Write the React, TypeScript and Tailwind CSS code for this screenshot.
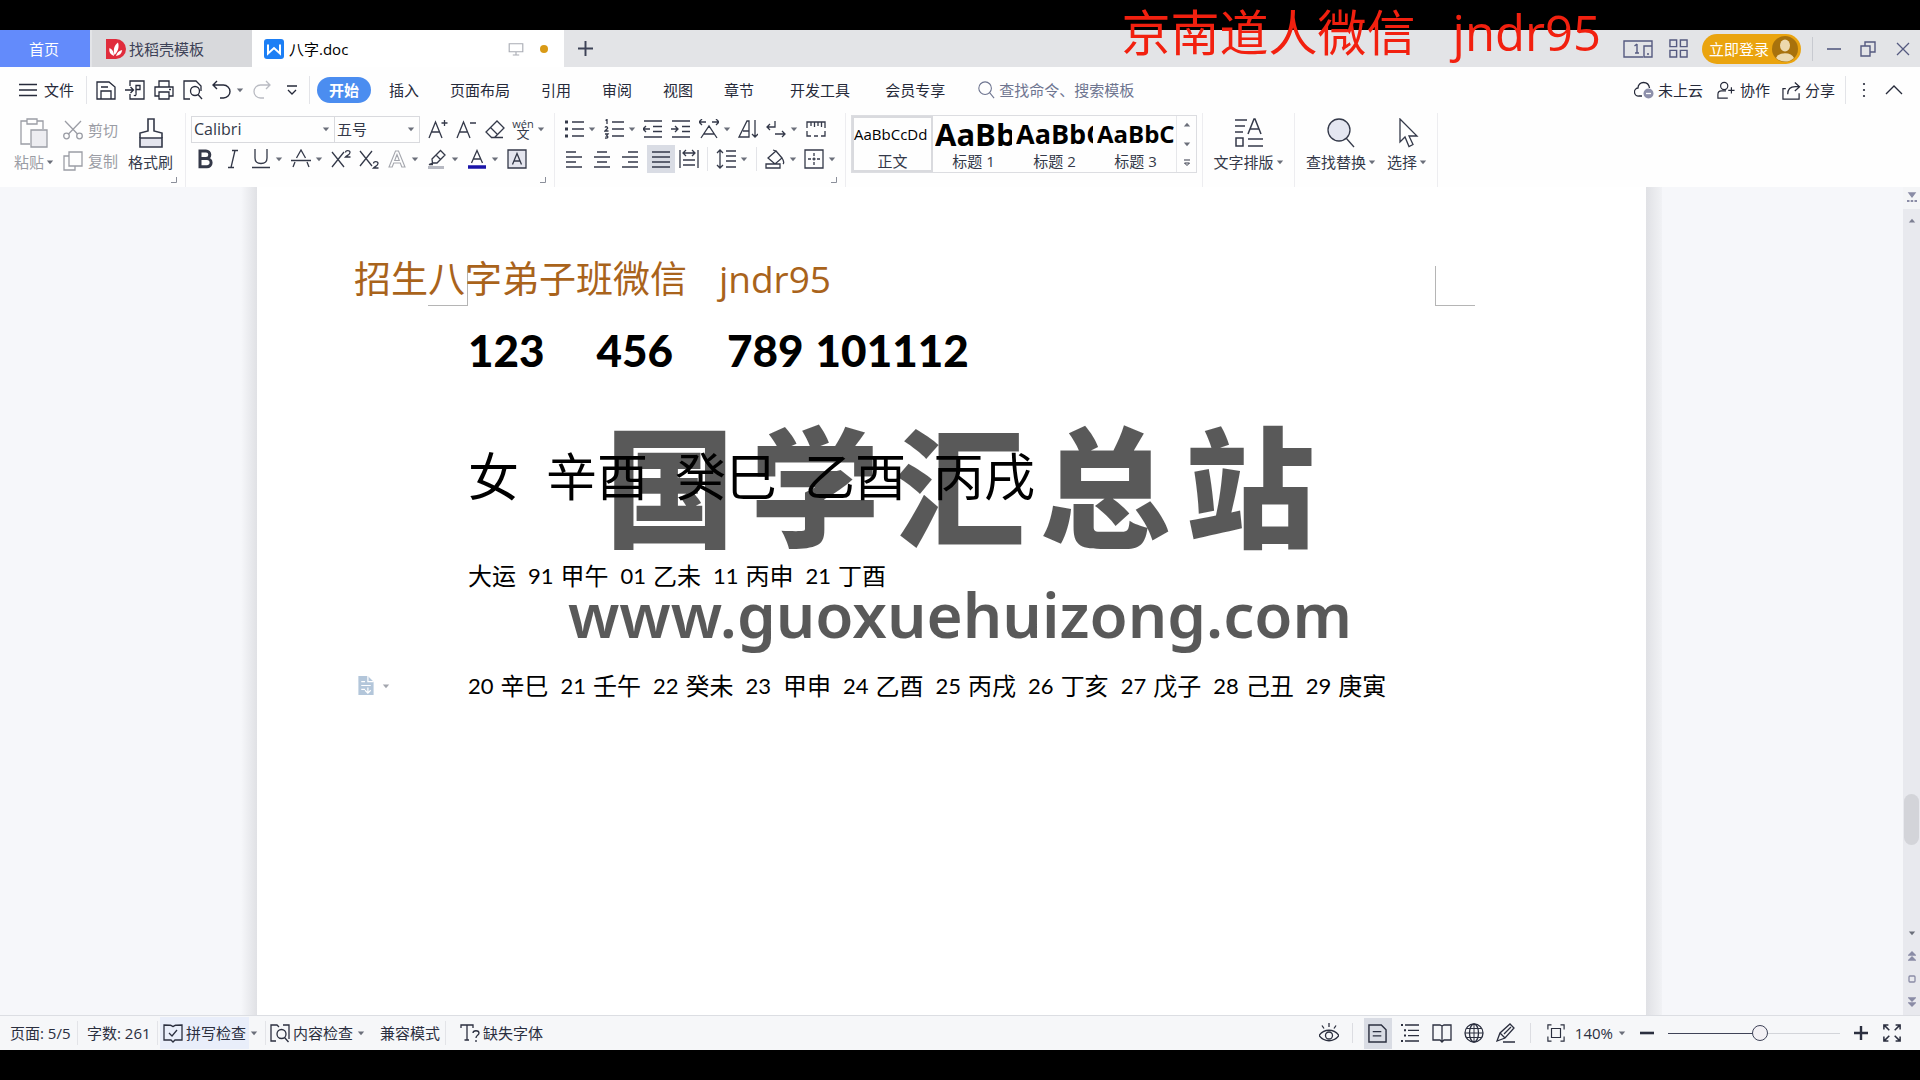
import type { ReactNode } from "react";

type IconProps = { children: ReactNode; className?: string; box?: string; sw?: number };

function Icon({ children, className = "size-5", box = "0 0 20 20", sw = 1.3 }: IconProps) {
  return (
    <svg viewBox={box} className={`shrink-0 ${className}`} fill="none" stroke="currentColor" strokeWidth={sw} aria-hidden="true">
      {children}
    </svg>
  );
}

function Caret({ className = "text-[#6b6f7a]" }: { className?: string }) {
  return (
    <svg viewBox="0 0 8 8" className={`size-2 shrink-0 ${className}`} fill="currentColor" aria-hidden="true">
      <path d="M.8 2.500h6.400L4 6.200z" />
    </svg>
  );
}

function Tool({ label, children, caret = false, className = "" }: { label: string; children: ReactNode; caret?: boolean; className?: string }) {
  return (
    <button type="button" aria-label={label} className={`flex h-7 items-center gap-1 ${className}`}>
      {children}
      {caret && <Caret />}
    </button>
  );
}

function Divider({ className = "h-6 bg-[#e3e4e8]" }: { className?: string }) {
  return <div className={`w-px shrink-0 ${className}`} />;
}

function Corner() {
  return (
    <svg viewBox="0 0 6 6" className="absolute right-2 bottom-1 size-1.5" fill="none" stroke="#8b8f9a" aria-hidden="true">
      <path d="M5.500 0v5.500H0" />
    </svg>
  );
}

function TitleBar() {
  return (
    <header className="flex h-[37px] items-stretch bg-[#e3e4e7] text-[15px] leading-5 text-[#3d4257]">
      <button type="button" className="w-[90px] bg-[#638bfb] pr-0.5 text-white">首页</button>
      <button type="button" className="ml-0.5 flex w-40 items-center gap-[3px] bg-[#d8d9dc] pl-3.5">
        <svg viewBox="0 0 20 20" className="size-5" aria-hidden="true">
          <path d="M0 0h10a10 10 0 0 1 0 20H0z" fill="#e02c3c" />
          <path d="M8 17C4 15.500 2.800 12.500 3.500 9c3 1.500 4.500 4 4.500 8zM8.500 16C7 11 8 6.500 12 3.500c1.500 4.500 0 9-3.500 12.500zM10 17c.8-3.500 3-5.500 6.200-6-.3 3.500-2.700 5.500-6.200 6z" fill="#fff" />
        </svg>
        <span>找稻壳模板</span>
      </button>
      <div className="flex w-[312px] items-center bg-white pr-4 pl-3 text-black">
        <svg viewBox="0 0 20 20" className="size-5" aria-hidden="true">
          <rect width="20" height="20" rx="3" fill="#1d7ff5" />
          <path d="M4 5.500v9L10 9l6 5.500v-9" fill="none" stroke="#fff" strokeWidth="2" />
        </svg>
        <span className="ml-[5px]">八字.doc</span>
        <Icon className="ml-auto size-4 text-[#a9acb4]" sw={1.4}>
          <path d="M1.500 3.500h17v10h-17zM10 13.500v4M6 17.500h8" />
        </Icon>
        <span className="ml-4 size-2 rounded-full bg-[#d99a16]" />
      </div>
      <button type="button" aria-label="新建标签" className="flex w-[42px] items-center justify-center">
        <Icon className="size-[15px]" sw={2.6}><path d="M10 0v20M0 10h20" /></Icon>
      </button>
      <div className="ml-auto flex items-center pr-2.5 text-[#555a80]">
        <button type="button" aria-label="窗口布局">
          <Icon box="0 0 30 18" className="h-[18px] w-[30px]" sw={1.4}>
            <path d="M20 17H1V1h28v16M21 17V6h8v11zM14 4v9M11.500 6 14 4M12 13h4M24 14h2" />
          </Icon>
        </button>
        <button type="button" aria-label="应用" className="ml-4">
          <Icon className="size-[19px]" sw={1.5}>
            <path d="M1 1h7v7H1zM12 1h7v7h-7zM1 12h7v7H1zM12 12h7v7h-7z" />
          </Icon>
        </button>
        <button type="button" className="ml-3.5 flex h-[30px] w-[99px] items-center justify-between rounded-full bg-[#eaa40f] pr-[3px] pl-[7px] text-white">
          <span>立即登录</span>
          <svg viewBox="0 0 26 26" className="size-[26px]" aria-hidden="true">
            <circle cx="13" cy="13" r="13" fill="#a8720c" />
            <ellipse cx="13" cy="9.500" rx="5" ry="6" fill="#ecd9ad" />
            <path d="M4 22a9.500 7 0 0 1 18 0 13 13 0 0 1-18 0z" fill="#ecd9ad" />
          </svg>
        </button>
        <Divider className="ml-[11px] h-6 bg-[#c8cad0]" />
        <button type="button" aria-label="最小化" className="ml-3.5">
          <Icon box="0 0 14 14" className="size-3.5" sw={1.6}><path d="M0 7h14" /></Icon>
        </button>
        <button type="button" aria-label="还原" className="ml-[19px]">
          <Icon box="0 0 16 16" className="size-4" sw={1.4}><path d="M1 5h9v10H1zM5 5V1h10v10h-5" /></Icon>
        </button>
        <button type="button" aria-label="关闭" className="ml-5">
          <Icon box="0 0 14 14" className="size-3.5" sw={1.3}><path d="M1 1l12 12M13 1L1 13" /></Icon>
        </button>
      </div>
    </header>
  );
}

function MenuBar() {
  return (
    <nav className="flex h-[46px] items-center pr-[17px] pl-[19px] text-[15px] leading-5 text-[#262a3a]">
      <button type="button" className="flex items-center gap-[7px]">
        <Icon box="0 0 18 14" className="h-3.5 w-[18px]"><path d="M0 1.500h18M0 7h18M0 12.500h18" /></Icon>
        文件
      </button>
      <Divider className="mr-[9px] ml-3 h-7 bg-[#e3e4e8]" />
      <div className="flex items-center gap-[9px]">
        <Tool label="保存"><Icon><path d="M1 2h12l6 5v12H1zM5 19v-8h10v8M5 7h7" /></Icon></Tool>
        <Tool label="输出为PDF"><Icon><path d="M5 6V1h14v18H5v-5M0 10h8M5.500 7l3 3-3 3M11 13V5.500h4v4h-4M9 15c1 1.500 2.500.5 2-2" /></Icon></Tool>
        <Tool label="打印"><Icon><path d="M5 7V1h10v6M5 16H1V7h18v9h-4M5 12h10v7H5zM15 9.500h2" /></Icon></Tool>
        <Tool label="打印预览"><Icon><path d="M7 19H1V1h12l5 5v5" /><circle cx="12" cy="11" r="4.500" /><path d="m15 14.500 4 4.500" /></Icon></Tool>
        <Tool label="撤销" caret><Icon sw={1.4}><path d="M5 1 1 5l4 4M1 5h10.500a6.500 6.500 0 0 1 0 13H8" /></Icon></Tool>
        <Tool label="重做" className="-ml-px text-[#b9bbc2]"><Icon sw={1.3}><path d="m14 1 4 4-4 4M18 5H8.500a6.500 6.500 0 0 0 0 13H12" /></Icon></Tool>
        <Tool label="自定义快速访问" className="ml-1.5"><Icon box="0 0 10 12" className="h-3 w-2.5"><path d="M0 2h10M1 6l4 4 4-4" /></Icon></Tool>
      </div>
      <Divider className="ml-3 h-7 bg-[#e3e4e8]" />
      <button type="button" className="ml-[7px] h-[26px] w-[54px] rounded-full bg-[#4b8df0] font-bold text-white">开始</button>
      <div className="ml-[18px] flex gap-[31px]">
        <button type="button">插入</button>
        <button type="button">页面布局</button>
        <button type="button">引用</button>
        <button type="button">审阅</button>
        <button type="button">视图</button>
        <button type="button">章节</button>
      </div>
      <div className="ml-9 flex gap-[35px]">
        <button type="button">开发工具</button>
        <button type="button">会员专享</button>
      </div>
      <label className="ml-8 flex items-center gap-1 text-[#6e7590]">
        <Icon className="size-[18px]" sw={1.2}><circle cx="9" cy="8" r="7" /><path d="m14 13 5 6" /></Icon>
        <input type="text" aria-label="查找命令" placeholder="查找命令、搜索模板" className="w-40 bg-transparent outline-none placeholder:text-[#6e7590]" />
      </label>
      <div className="ml-auto flex items-center gap-3">
        <button type="button" className="flex items-center gap-1">
          <Icon><path d="M8 16H5a4 4 0 0 1-1-8C4 4.500 6.500 2.500 9.500 2.500S15 4.500 15.500 8" /><circle cx="14.500" cy="13.500" r="5" fill="#8d90ab" stroke="none" /><path d="M12 13.500h5" stroke="#fff" /></Icon>
          未上云
        </button>
        <button type="button" className="ml-0.5 flex items-center gap-[5px]">
          <Icon className="size-[18px]"><circle cx="8" cy="5.500" r="4" /><path d="M12 19H1v-4c0-2.500 1.500-4 4-4h5M16 7v7M12.500 10.500h7" /></Icon>
          协作
        </button>
        <button type="button" className="flex items-center gap-1">
          <Icon className="size-[19px]"><path d="M4 8H1v11h17v-6M6 14c0-5 3-8 8-8h4M13.500 1.500 18.500 6l-5 4.500" /></Icon>
          分享
        </button>
        <Divider className="-ml-0.5 h-7 bg-[#e3e4e8]" />
        <button type="button" aria-label="更多" className="ml-1">
          <svg viewBox="0 0 4 16" className="h-4 w-1" fill="currentColor" aria-hidden="true">
            <circle cx="2" cy="2" r="1.100" /><circle cx="2" cy="8" r="1.100" /><circle cx="2" cy="14" r="1.100" />
          </svg>
        </button>
        <button type="button" aria-label="收起功能区" className="ml-[7px]">
          <Icon box="0 0 18 10" className="h-2.5 w-[18px]"><path d="m1 9 8-8 8 8" /></Icon>
        </button>
      </div>
    </nav>
  );
}

function StyleCell({ sample, name, look, active = false }: { sample: string; name: string; look: string; active?: boolean }) {
  return (
    <button type="button" className={`flex h-[56px] w-[81px] flex-col items-center overflow-hidden px-0.5 ${active ? "outline-2 -outline-offset-2 outline-[#d9dade]" : ""}`}>
      <span className={`flex h-9 w-full items-center overflow-hidden whitespace-nowrap text-black ${look}`}>{sample}</span>
      <span className="text-[15px] leading-[18px]">{name}</span>
    </button>
  );
}

function Ribbon() {
  return (
    <section className="flex h-[74px] text-[15px] leading-5 text-[#343949]">
      <div className="relative flex w-[185px] pl-[13px]">
        <button type="button" className="flex w-[42px] flex-col items-center gap-1 pt-[5px] text-[#9b9da5]">
          <Icon box="0 0 28 30" className="h-[30px] w-7">
            <path d="M10 26H1V3h6M17 3h6v8M7 1h10v5H7z" />
            <path d="M11 12h16v17H11z" fill="#ededf1" />
          </Icon>
          <span className="flex items-center gap-0.5">粘贴<Caret /></span>
        </button>
        <div className="ml-2 flex flex-col text-[#9b9da5]">
          <button type="button" className="flex h-[31px] items-center gap-[5px] pt-0.5">
            <Icon><circle cx="3.500" cy="16" r="2.800" /><circle cx="16.500" cy="16" r="2.800" /><path d="M2 1l12.500 13M18 1 5.500 14" /></Icon>
            剪切
          </button>
          <button type="button" className="flex h-[31px] items-center gap-[5px] pt-0.5">
            <Icon><path d="M6 1h13v14H6zM6 5H1v14h11v-4" /></Icon>
            复制
          </button>
        </div>
        <button type="button" className="ml-2.5 flex flex-col items-center gap-1 pt-[5px]">
          <Icon box="0 0 24 30" className="h-[30px] w-6" sw={1.6}>
            <path d="M1 20h22v9H1z" fill="#e4e5ee" />
            <path d="M1 20v-5l8-2V1h6v12l8 2v5" />
          </Icon>
          格式刷
        </button>
        <Corner />
      </div>
      <Divider className="h-[74px] bg-[#ededf0]" />
      <div className="relative flex w-[368px] flex-col pt-0.5 pl-[5px]">
        <div className="flex items-center gap-2">
          <div className="flex h-[27px] w-[229px] border border-[#d9dade]">
            <label className="flex w-[143px] items-center justify-between border-r border-[#d9dade] pr-1 pl-0.5">
              <select aria-label="字体" className="w-28 appearance-none text-[16px] outline-none"><option>Calibri</option></select>
              <Caret />
            </label>
            <label className="flex flex-1 items-center justify-between pr-1 pl-0.5">
              <select aria-label="字号" className="w-16 appearance-none outline-none"><option>五号</option></select>
              <Caret />
            </label>
          </div>
          <Tool label="增大字号"><Icon><path d="M1 19 7.500 3 14 19M3.500 13h8M16.500 1v6M13.500 4h6" /></Icon></Tool>
          <Tool label="减小字号"><Icon><path d="M1 19 7.500 3 14 19M3.500 13h8M14 4h6" /></Icon></Tool>
          <Tool label="清除格式" className="ml-px"><Icon><path d="M6.500 18.500 1 13 12 2l7 7-9.500 9.500zM6 18.500h12" /><path d="m5.500 8.500 7 7" /></Icon></Tool>
          <Tool label="拼音指南" caret>
            <span className="flex w-5 flex-col items-center text-[11px] leading-[9px]"><span>wén</span><span className="text-[13px] leading-[11px]">文</span></span>
          </Tool>
        </div>
        <div className="mt-0.5 ml-1 flex items-center gap-2">
          <Tool label="加粗"><Icon sw={3}><path d="M5 2h6a3.800 3.800 0 0 1 0 7.600H5zM5 9.600h7a4.100 4.100 0 0 1 0 8.200H5z" /></Icon></Tool>
          <Tool label="倾斜"><Icon><path d="M9 1.500h6M5 18.500h6M12 1.500l-4 17" /></Icon></Tool>
          <Tool label="下划线" caret><Icon><path d="M4 0v9c0 3.500 2 5.500 6 5.500s6-2 6-5.500V0M1 18.500h18" /></Icon></Tool>
          <Tool label="删除线" caret><Icon><path d="M5.500 9 10 1l4.500 8M4 13l-2 5M16 13l2 5M0 11.500h20" /></Icon></Tool>
          <Tool label="上标"><Icon><path d="m1 3 12 15M13 3 1 18M14.500 3.500C14.500 1 19 .8 19 3.500c0 2-3 3-4.500 4.500h5" /></Icon></Tool>
          <Tool label="下标"><Icon><path d="m1 2 12 15M13 2 1 17M14.500 14.500c0-2.500 4.500-2.700 4.500 0 0 2-3 3-4.500 4.500h5" /></Icon></Tool>
          <Tool label="文字效果" caret className="text-[#a5a7ae]"><Icon sw={1.1}><path d="M2 18 8.500 2h3L18 18h-3.200l-1.500-4H6.700l-1.500 4zM10 5.500 7.700 11.500h4.600z" /></Icon></Tool>
          <Tool label="突出显示" caret><Icon><path d="m5 10 8.500-8.500 4.500 4.500-8 8H5.500zM5.500 14 2 15.500h4M9 6l5 5" /><path d="M1 18.500h16" stroke="#b7b9c2" strokeWidth="3" /></Icon></Tool>
          <Tool label="字体颜色" caret><Icon><path d="M4.500 14 10 1.500 15.500 14M6.500 10h7" /><path d="M1 18h18" stroke="#1a14a8" strokeWidth="3.500" /></Icon></Tool>
          <Tool label="字符底纹"><Icon><path d="M1 1h18v18H1z" fill="#e4e5ee" /><path d="m5.500 15.500 4.500-11 4.500 11M7 12h6" /></Icon></Tool>
        </div>
        <Corner />
      </div>
      <Divider className="h-[74px] bg-[#ededf0]" />
      <div className="relative flex w-[290px] flex-col pt-0.5 pl-[9px]">
        <div className="flex items-center gap-2">
          <Tool label="项目符号" caret><Icon><path d="M8 3h12M8 10h12M8 17h12" /><path d="M1 3h3M1 10h3M1 17h3" strokeWidth="3" /></Icon></Tool>
          <Tool label="编号" caret><Icon><path d="M8 3h12M8 10h12M8 17h12M1.500 1.500 3 .5V5M1 8.500c1-1.500 3-.5 2.500 1L1 12h3.500M1 15h3l-1.500 2c2 0 2 2.500-1.500 2" /></Icon></Tool>
          <Tool label="减少缩进" className="-ml-px"><Icon><path d="M1 2h18M10 7.500h9M10 12.500h9M1 18h18M0 10h7M3 7l-3 3 3 3" /></Icon></Tool>
          <Tool label="增加缩进"><Icon><path d="M1 2h18M11 7.500h8M11 12.500h8M1 18h18M0 10h7M4 7l3 3-3 3" /></Icon></Tool>
          <Tool label="中文版式" caret><Icon><path d="M2 19 10 7l8 12M5 15h10M0 3h7M3 0 0 3l3 3M20 3h-7M17 0l3 3-3 3" /></Icon></Tool>
          <Tool label="排序" className="-ml-px"><Icon><path d="M1 18 9 2h2v16zM5 12h6M17 1v17M14 15l3 3 3-3" /></Icon></Tool>
          <Tool label="显示段落标记" caret><Icon><path d="M9 2v6H1M4 5 1 8l3 3M9 15h10M16 12l3 3-3 3" /></Icon></Tool>
          <Tool label="制表位"><Icon><path d="M1 9V3h18v6M5 3v4M8.500 3v5M12 3v4M15.500 3v5M1 12v5h4M8 17h4M15 17h4v-5" /></Icon></Tool>
        </div>
        <div className="mt-0.5 flex items-center gap-2">
          <Tool label="左对齐"><Icon><path d="M2 3h10M2 8h16M2 13h10M2 18h16" /></Icon></Tool>
          <Tool label="居中"><Icon><path d="M5 3h10M2 8h16M5 13h10M2 18h16" /></Icon></Tool>
          <Tool label="右对齐"><Icon><path d="M8 3h10M2 8h16M8 13h10M2 18h16" /></Icon></Tool>
          <button type="button" aria-label="两端对齐" aria-pressed="true" className="-ml-px flex h-7 w-7 items-center justify-center bg-[#d9dce4]">
            <Icon><path d="M1 3h18M1 8h18M1 13h18M1 18h18" /></Icon>
          </button>
          <Tool label="分散对齐" className="-ml-1"><Icon><path d="M1 1v18M19 1v18M4 4h12M7 1 4 4l3 3M13 1l3 3-3 3M4 11h12M4 16h12" /></Icon></Tool>
          <Divider />
          <Tool label="行距" caret><Icon><path d="M4 1v18M1 4l3-3 3 3M1 16l3 3 3-3M10 2h10M10 7h10M10 12h10M10 18h10" /></Icon></Tool>
          <Divider />
          <Tool label="底纹" caret><Icon><path d="m3 9 8-7 6 7-7 6zM8 1l3 1M17 9c2 3 2 5 1 6M1 15h14v4H1z" /></Icon></Tool>
          <Tool label="边框" caret className="-ml-px"><Icon><path d="M1 1h18v18H1z" /><path d="M10 4v12M4 10h12" strokeDasharray="3 1.500" /></Icon></Tool>
        </div>
        <Corner />
      </div>
      <Divider className="h-[74px] bg-[#ededf0]" />
      <div className="mt-0.5 ml-[5px] flex h-[58px] border border-[#dcdde1]">
        <StyleCell active sample="AaBbCcDd" name="正文" look="text-[15px]" />
        <StyleCell sample="AaBb" name="标题 1" look="text-[31px] font-bold" />
        <StyleCell sample="AaBbC" name="标题 2" look="text-[27px] font-bold" />
        <StyleCell sample="AaBbCc" name="标题 3" look="text-[24px] font-bold" />
        <div className="flex w-5 flex-col items-center justify-around border-l border-[#e6e7ea]">
          <button type="button" aria-label="上一行样式" className="flex rotate-180"><Caret /></button>
          <button type="button" aria-label="下一行样式" className="flex"><Caret /></button>
          <button type="button" aria-label="全部样式" className="flex"><Icon box="0 0 8 8" className="size-2" sw={1}><path d="M1 1h6M1.500 4h5L4 6.500z" /></Icon></button>
        </div>
      </div>
      <Divider className="ml-[5px] h-[74px] bg-[#ededf0]" />
      <button type="button" className="flex w-[91px] flex-col items-center gap-1 pt-[5px]">
        <Icon box="0 0 30 30" className="size-[30px]" sw={1.5}>
          <path d="M1 2h12M1 8h10M1 14h8M14 16l6-15h1l6 15M16 11h9M2 20h7v8H2zM14 21h15M14 28h15" />
        </Icon>
        <span className="flex items-center gap-0.5">文字排版<Caret /></span>
      </button>
      <Divider className="h-[74px] bg-[#ededf0]" />
      <button type="button" className="ml-[11px] flex flex-col items-center gap-1 pt-[5px]">
        <Icon box="0 0 30 30" className="size-[30px]">
          <circle cx="13" cy="12" r="11" fill="#e4e6f1" />
          <path d="m20 20 8 9" />
        </Icon>
        <span className="flex items-center gap-0.5">查找替换<Caret /></span>
      </button>
      <button type="button" className="ml-[11px] flex flex-col items-center gap-1 pt-[5px]">
        <Icon box="0 0 30 30" className="size-[30px]">
          <path d="M8 1v23l5-5 4 9.500 4-2-4-8.500h8z" />
        </Icon>
        <span className="flex items-center gap-0.5">选择<Caret /></span>
      </button>
      <Divider className="ml-2.5 h-[74px] bg-[#ededf0]" />
    </section>
  );
}

const decades = [["91", "甲午"], ["01", "乙未"], ["11", "丙申"], ["21", "丁酉"]];
const years = [
  ["20", "辛巳"], ["21", "壬午"], ["22", "癸未"], ["23", "甲申"], ["24", "乙酉"],
  ["25", "丙戌"], ["26", "丁亥"], ["27", "戊子"], ["28", "己丑"], ["29", "庚寅"],
];

function Pair({ pair }: { pair: string[] }) {
  return (
    <span className={`flex items-center ${pair[0] === "23" ? "gap-3" : "gap-[7px]"}`}>
      <span className="text-[22px]">{pair[0]}</span>
      <span>{pair[1]}</span>
    </span>
  );
}

function Page() {
  return (
    <article className="relative w-[73%] bg-white pt-[79px] font-['Lato','Noto_Sans_CJK_SC',sans-serif] text-black">
      <div className="mx-[171px] flex h-10 justify-between">
        <div className="w-10 border-r border-b border-[#b5b5b5]" />
        <div className="w-10 border-b border-l border-[#b5b5b5]" />
      </div>
      <p className="absolute top-[65px] left-[97px] flex gap-8 font-['Open_Sans','Noto_Sans_CJK_SC',sans-serif] text-[37px] leading-[54px] whitespace-nowrap text-[#a9631b]">
        <span>招生八字弟子班微信</span>
        <span>jndr95</span>
      </p>
      <div className="pl-[211px] whitespace-nowrap">
        <p className="mt-[19px] flex text-[44px] leading-[50px] font-black">
          <span>123</span><span className="ml-[52px]">456</span><span className="ml-[54px]">789</span><span className="ml-3">101112</span>
        </p>
        <p className="mt-[69px] flex gap-[27px] text-[51px] leading-[66px]">
          <span>女</span><span>辛酉</span><span>癸巳</span><span>乙酉</span><span>丙戌</span>
        </p>
        <p className="mt-[50px] flex gap-3 text-[24px] leading-8">
          <span>大运</span>
          {decades.map((d) => <Pair key={d[0]} pair={d} />)}
        </p>
        <p className="mt-[78px] flex gap-3 text-[24px] leading-8">
          {years.map((y) => <Pair key={y[0]} pair={y} />)}
        </p>
      </div>
      <button type="button" aria-label="段落布局" className="absolute top-[489px] left-[101px] flex items-center gap-2">
        <svg viewBox="0 0 16 20" className="h-[19px] w-4" aria-hidden="true">
          <path d="M0 0h10l6 6v14H0z" fill="#b3c6da" />
          <path d="M10 0v6h6M3 6h4M3 10h10M3 14h4M10 12v5M7 15l3 3 3-3" fill="none" stroke="#fff" strokeWidth="1.300" />
        </svg>
        <Caret className="text-[#a3a6ae]" />
      </button>
    </article>
  );
}

function ScrollBar() {
  return (
    <div className="flex w-[17px] flex-col items-center bg-[#e8e9ee] text-[#8a8ca6]">
      <button type="button" aria-label="标尺" className="flex h-[22px] w-full items-center justify-center bg-[#f4f5f7]">
        <Icon box="0 0 10 12" className="h-3 w-2.5"><path d="M2 1h6L5 5z" fill="currentColor" /><path d="M0 9h2.500M3.700 9h2.500M7.500 9H10" strokeWidth="2" /></Icon>
      </button>
      <button type="button" aria-label="向上滚动" className="mt-2 flex rotate-180"><Caret className="text-[#7c7f92]" /></button>
      <div className="flex-[567]" />
      <div className="h-[51px] w-[15px] rounded-full bg-[#d3d4d9]" />
      <div className="flex-[84]" />
      <div className="flex flex-col items-center gap-3.5 pb-2">
        <button type="button" aria-label="向下滚动" className="flex"><Caret /></button>
        <button type="button" aria-label="上一页" className="flex"><Icon box="0 0 8 10" className="h-2.5 w-2"><path d="M1 4l3-3 3 3zM1 9l3-3 3 3z" fill="currentColor" /></Icon></button>
        <button type="button" aria-label="选择浏览对象" className="flex"><Icon box="0 0 8 8" className="size-2"><rect x="1" y="1" width="6" height="6" rx="1" /></Icon></button>
        <button type="button" aria-label="下一页" className="flex"><Icon box="0 0 8 10" className="h-2.5 w-2"><path d="M1 1l3 3 3-3zM1 6l3 3 3-3z" fill="currentColor" /></Icon></button>
      </div>
    </div>
  );
}

function StatusBar() {
  return (
    <footer className="flex h-[35px] items-center border-t border-[#dcdee3] bg-[#f6f7f9] pr-[19px] pl-2.5 text-[15px] leading-5 whitespace-nowrap text-[#2b2f3f]">
      <span className="w-[67px]">页面: 5/5</span>
      <Divider />
      <span className="ml-[9px] w-[70px]">字数: 261</span>
      <Divider />
      <button type="button" className="ml-0.5 flex h-8 items-center gap-[3px] bg-[#e9eefa] px-[3px]">
        <Icon><path d="M10 4C9 2 7 2 1 2v15h7l2 2 2-2h7V2c-6 0-8 0-9 2M6 10l3 3 5-6" /></Icon>
        拼写检查
      </button>
      <Caret className="ml-px text-[#6b6f7a]" />
      <Divider className="ml-[7px] h-6 bg-[#e3e4e8]" />
      <button type="button" className="ml-1 flex items-center gap-[3px]">
        <Icon><path d="M6 18H1V2h6l2 2M13 2h6v14" /><circle cx="11.500" cy="11" r="4.500" /><path d="m14.500 14.500 4 4.500" /></Icon>
        内容检查
      </button>
      <Caret className="ml-1 text-[#6b6f7a]" />
      <button type="button" className="ml-[15px]">兼容模式</button>
      <Divider className="ml-[5px] h-6 bg-[#e3e4e8]" />
      <button type="button" className="ml-3.5 flex items-center gap-[3px]">
        <Icon><path d="M1 5V2h12v3M7 2v15M4.500 17H9M13 10c0-3 6-3 6 0 0 2.500-3 2-3 5M16 17v2" /></Icon>
        缺失字体
      </button>
      <div className="ml-auto flex items-center">
        <Tool label="护眼模式"><Icon><path d="M0 12.500c5-7 15-7 20 0-5 7-15 7-20 0zM10 0v4M3 2.500l2 3M17 2.500l-2 3" /><circle cx="10" cy="12.500" r="3.500" /></Icon></Tool>
        <Divider className="ml-[13px] h-5 bg-[#dcdde2]" />
        <button type="button" aria-label="页面视图" aria-pressed="true" className="ml-[11px] flex h-[31px] w-7 items-center justify-center bg-[#d9dce4]">
          <Icon className="size-[19px]" sw={1.5}><path d="M1 1h13l5 5v13H1zM5 8h9M5 12.500h9" /></Icon>
        </button>
        <div className="ml-2 flex items-center gap-3">
          <Tool label="大纲"><Icon><path d="M5 2h14M8 7.300h11M8 12.600h11M5 18h14" /><path d="M1 2h2M4 7.300h2M4 12.600h2M1 18h2" strokeWidth="2" /></Icon></Tool>
          <Tool label="阅读版式"><Icon><path d="M10 3v16M10 3 8 2H1v15h7l2 2 2-2h7V2h-7z" /></Icon></Tool>
          <Tool label="Web版式"><Icon><circle cx="10" cy="10" r="9" /><ellipse cx="10" cy="10" rx="4.500" ry="9" /><path d="M1 10h18M2.500 5.500h15M2.500 14.500h15M10 1v18" strokeWidth="1" /></Icon></Tool>
          <Tool label="写作模式"><Icon><path d="M1 18 4 10 14 1l4 4-9 10zM4 10l5 5M8 11l7-7M7 19h12" /></Icon></Tool>
        </div>
        <Divider className="ml-3.5 h-5 bg-[#dcdde2]" />
        <Tool label="适合页面" className="ml-4"><Icon className="size-[18px]"><path d="M1 6V1h4M15 1h4v5M19 14v5h-4M5 19H1v-5M5 5h10v10H5z" /></Icon></Tool>
        <button type="button" className="ml-2.5 flex items-center gap-[5px]">140%<Caret /></button>
        <button type="button" aria-label="缩小" className="ml-3.5"><Icon box="0 0 14 14" className="size-3.5" sw={2.6}><path d="M0 7h14" /></Icon></button>
        <input
          type="range"
          aria-label="显示比例"
          defaultValue={54}
          className="mx-3.5 h-4 w-[172px] appearance-none bg-[linear-gradient(to_right,#3f4358_54%,#d3d5da_54%)] bg-[length:100%_1px] bg-center bg-no-repeat outline-none [&::-webkit-slider-thumb]:size-4 [&::-webkit-slider-thumb]:appearance-none [&::-webkit-slider-thumb]:rounded-full [&::-webkit-slider-thumb]:border [&::-webkit-slider-thumb]:border-[#3f4358] [&::-webkit-slider-thumb]:bg-[#f3f1f5]"
        />
        <button type="button" aria-label="放大"><Icon box="0 0 14 14" className="size-3.5" sw={2.4}><path d="M0 7h14M7 0v14" /></Icon></button>
        <button type="button" aria-label="全屏" className="ml-[15px]">
          <Icon className="size-[18px]" sw={1.7}><path d="M1 6V1h5M1 1l6 6M14 1h5v5M19 1l-6 6M1 14v5h5M1 19l6-6M19 14v5h-5M19 19l-6-6" /></Icon>
        </button>
      </div>
    </footer>
  );
}

export default function App() {
  return (
    <div className="relative flex min-h-screen flex-col bg-black py-[30px] font-['Open_Sans','Noto_Sans_CJK_SC',sans-serif]">
      <TitleBar />
      <div className="bg-[#fefefe]">
        <MenuBar />
        <Ribbon />
      </div>
      <main className="flex flex-1 bg-[#f6f7fa]">
        <div className="flex flex-1">
          <div className="flex flex-1 justify-end"><div className="w-4 bg-linear-to-r from-[#f6f7fa] to-[#e0e1e5]" /></div>
          <Page />
          <div className="flex-1"><div className="h-full w-4 bg-linear-to-r from-[#e0e1e5] to-[#f1f2f5]" /></div>
        </div>
        <ScrollBar />
      </main>
      <StatusBar />
      <p className="pointer-events-none absolute -top-0.5 right-[319px] flex gap-[37px] text-[49px] leading-[68px] whitespace-nowrap text-[#f2200f]">
        <span>京南道人微信</span>
        <span>jndr95</span>
      </p>
      <div className="pointer-events-none absolute inset-x-0 top-[417px] flex flex-col items-center text-black/65">
        <div className="flex gap-[15px] text-[130px] leading-[140px] font-black">
          <span>国</span><span>学</span><span>汇</span><span>总</span><span>站</span>
        </div>
        <div className="font-['Noto_Sans','Open_Sans',sans-serif] text-[62px] leading-[114px] font-semibold">www.guoxuehuizong.com</div>
      </div>
    </div>
  );
}
